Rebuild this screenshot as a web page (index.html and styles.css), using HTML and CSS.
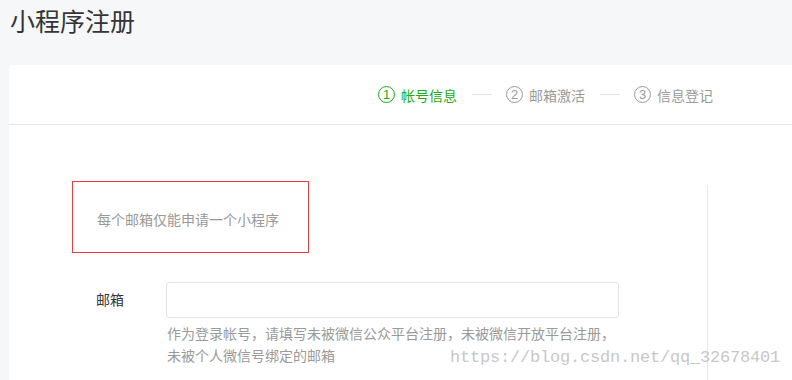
FILE: index.html
```html
<!DOCTYPE html>
<html lang="zh-CN">
<head>
    <meta charset="UTF-8">
    <title>小程序注册</title>
    <link rel="stylesheet" href="styles.css">
</head>
<body>

<div class="page">
    <h1 class="judul">小程序注册</h1>

    <div class="card">
        <!-- STEPS -->
        <div class="card-head">
            <div class="step aktif"><span class="nomor">1</span>帐号信息</div>
            <div class="garis"></div>
            <div class="step"><span class="nomor">2</span>邮箱激活</div>
            <div class="garis"></div>
            <div class="step"><span class="nomor">3</span>信息登记</div>
        </div>

        <!-- FORM -->
        <div class="card-body">
            <div class="form-col">
                <div class="tip-box">每个邮箱仅能申请一个小程序</div>

                <div class="form-group">
                    <label>邮箱</label>
                    <div class="field">
                        <input type="text" id="email">
                        <div class="hint">
                            <span>作为登录帐号，请填写未被微信公众平台注册，未被微信开放平台注册，</span>
                            <span>未被个人微信号绑定的邮箱</span>
                        </div>
                    </div>
                </div>
            </div>
            <div class="side-col"></div>
        </div>
    </div>

    <div class="watermark">https://blog.csdn.net/qq_32678401</div>
</div>

</body>
</html>
```

FILE: styles.css
```css
body {
    margin: 0;
    font-family: "Noto Sans CJK SC", "Noto Sans", sans-serif;
    background-color: #f6f7f9;
    color: #353535;
    overflow: hidden;
}

.page {
    position: relative;
    width: 792px;
    height: 380px;
    padding: 0 0 0 9px;
    box-sizing: border-box;
    overflow: hidden;
}

.judul {
    margin: 0;
    padding: 2px 0 0 1px;
    height: 65px;
    box-sizing: border-box;
    font-size: 25px;
    font-weight: normal;
    line-height: 36px;
    color: #353535;
}

.card {
    width: 820px;
    background-color: white;
    border-radius: 4px 0 0 0;
}

.card-head {
    display: flex;
    align-items: center;
    height: 59px;
    padding-left: 369px;
    border-bottom: 1px solid #e7e7e7;
}

.step {
    display: flex;
    align-items: center;
    font-size: 14px;
    color: #9a9a9a;
}

.step.aktif {
    color: #1aad19;
}

.nomor {
    width: 17px;
    height: 17px;
    border: 1px solid currentColor;
    border-radius: 50%;
    box-sizing: border-box;
    display: flex;
    align-items: center;
    justify-content: center;
    font-size: 13px;
    line-height: 1;
    margin-right: 6px;
    font-family: "Liberation Sans", sans-serif;
}

.garis {
    width: 20px;
    height: 1px;
    background-color: #e2e2e2;
    margin: 0 14px 0 15px;
}

.card-body {
    display: flex;
    padding-top: 60px;
    height: 200px;
}

.form-col {
    width: 635px;
    padding-left: 63px;
    border-right: 1px solid #e7e7e7;
}

.tip-box {
    width: 237px;
    height: 72px;
    box-sizing: border-box;
    margin-top: -4px;
    border: 1px solid #f23c3c;
    padding: 27px 0 0 24px;
    font-size: 14px;
    line-height: 20px;
    color: #9a9a9a;
}

.form-group {
    display: flex;
    margin-top: 29px;
}

.form-group label {
    width: 70px;
    margin-left: 24px;
    font-size: 14px;
    line-height: 34px;
    color: #353535;
}

.field {
    width: 453px;
}

.field input {
    display: block;
    width: 100%;
    height: 36px;
    box-sizing: border-box;
    border: 1px solid #e4e4e4;
    border-radius: 3px;
    outline: none;
}

.hint {
    margin: 4px 0 0 1px;
    font-size: 14px;
    line-height: 22px;
    color: #9a9a9a;
}

.hint span {
    display: block;
    width: fit-content;
}

.watermark {
    position: absolute;
    left: 450px;
    top: 348px;
    font-family: "Liberation Mono", monospace;
    font-size: 17px;
    color: #c8c8c8;
    letter-spacing: -0.2px;
}
```
